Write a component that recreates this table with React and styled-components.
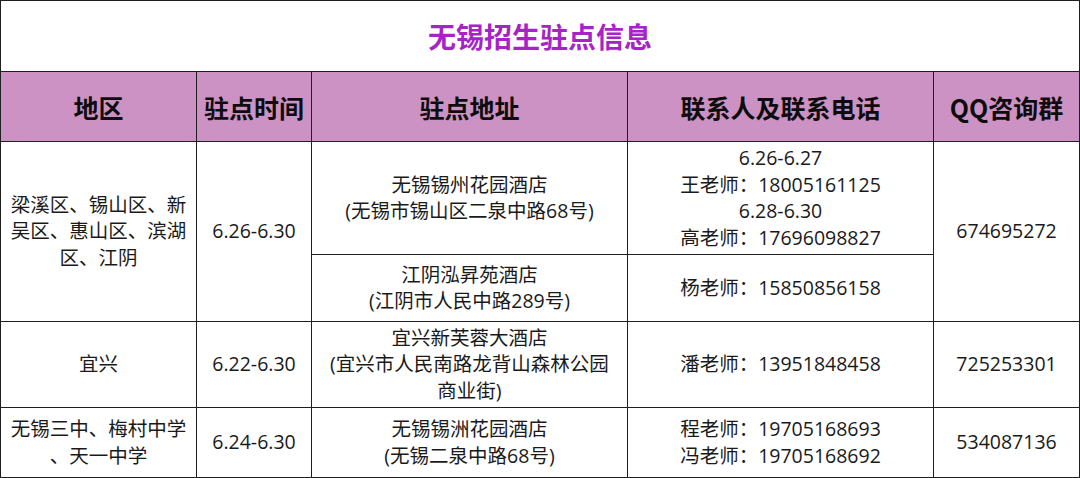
import React from "react";
import styled, { createGlobalStyle } from "styled-components";

const Global = createGlobalStyle`
  html, body { margin: 0; padding: 0; background: #ffffff; }
  body {
    font-family: "Open Sans", "Noto Sans CJK SC", sans-serif;
    color: #1a1a1a;
  }
`;

const Table = styled.table`
  width: 1079px;
  border-collapse: collapse;
  table-layout: fixed;
  font-family: "Open Sans", "Noto Sans CJK SC", sans-serif;
`;

const Row = styled.tr`
  height: ${(p) => p.$h}px;
`;

const Cell = styled.td`
  border: 1px solid #1f1f1f;
  padding: 0 6px;
  text-align: center;
  vertical-align: middle;
  font-size: 19.5px;
  line-height: 26.5px;
  color: #1a1a1a;
`;

const TitleCell = styled.td`
  border: 1px solid #1f1f1f;
  text-align: center;
  vertical-align: middle;
  font-size: 28px;
  font-weight: 700;
  color: #a624c6;
  font-family: "Noto Sans CJK SC", sans-serif;
  letter-spacing: 0;
`;

const HeadCell = styled.th`
  border: 1px solid #1f1f1f;
  background: #cc92c4;
  text-align: center;
  vertical-align: middle;
  font-size: 25px;
  font-weight: 700;
  color: #0d0d0d;
  padding: 0;
  font-family: "Noto Sans CJK SC", sans-serif;
`;

const Line = styled.div`
  white-space: nowrap;
`;

const Lines = ({ items }) => items.map((t, i) => <Line key={i}>{t}</Line>);

export default function App() {
  return (
    <>
      <Global />
      <Table>
        <colgroup>
          <col style={{ width: 196 }} />
          <col style={{ width: 115 }} />
          <col style={{ width: 316 }} />
          <col style={{ width: 306 }} />
          <col style={{ width: 146 }} />
        </colgroup>
        <tbody>
          <Row $h={71}>
            <TitleCell colSpan={5}>无锡招生驻点信息</TitleCell>
          </Row>
          <Row $h={70}>
            <HeadCell>地区</HeadCell>
            <HeadCell>驻点时间</HeadCell>
            <HeadCell>驻点地址</HeadCell>
            <HeadCell>联系人及联系电话</HeadCell>
            <HeadCell>QQ咨询群</HeadCell>
          </Row>
          <Row $h={113}>
            <Cell rowSpan={2}>
              <Lines items={["梁溪区、锡山区、新", "吴区、惠山区、滨湖", "区、江阴"]} />
            </Cell>
            <Cell rowSpan={2}>6.26-6.30</Cell>
            <Cell>
              <Lines items={["无锡锡州花园酒店", "(无锡市锡山区二泉中路68号)"]} />
            </Cell>
            <Cell>
              <Lines
                items={["6.26-6.27", "王老师：18005161125", "6.28-6.30", "高老师：17696098827"]}
              />
            </Cell>
            <Cell rowSpan={2}>674695272</Cell>
          </Row>
          <Row $h={67}>
            <Cell>
              <Lines items={["江阴泓昇苑酒店", "(江阴市人民中路289号)"]} />
            </Cell>
            <Cell>杨老师：15850856158</Cell>
          </Row>
          <Row $h={86}>
            <Cell>宜兴</Cell>
            <Cell>6.22-6.30</Cell>
            <Cell>
              <Lines items={["宜兴新芙蓉大酒店", "(宜兴市人民南路龙背山森林公园", "商业街)"]} />
            </Cell>
            <Cell>潘老师：13951848458</Cell>
            <Cell>725253301</Cell>
          </Row>
          <Row $h={70}>
            <Cell>
              <Lines items={["无锡三中、梅村中学", "、天一中学"]} />
            </Cell>
            <Cell>6.24-6.30</Cell>
            <Cell>
              <Lines items={["无锡锡洲花园酒店", "(无锡二泉中路68号)"]} />
            </Cell>
            <Cell>
              <Lines items={["程老师：19705168693", "冯老师：19705168692"]} />
            </Cell>
            <Cell>534087136</Cell>
          </Row>
        </tbody>
      </Table>
    </>
  );
}
